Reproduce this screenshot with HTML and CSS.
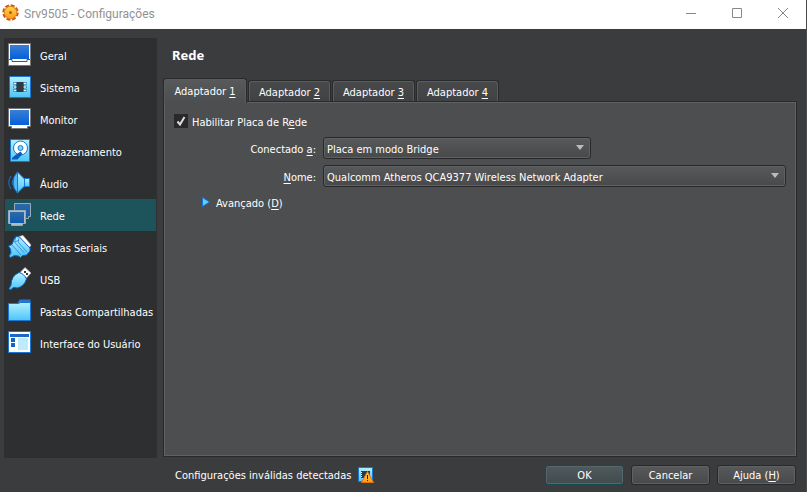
FILE: index.html
```html
<!DOCTYPE html>
<html lang="pt-BR">
<head>
<meta charset="utf-8">
<title>Srv9505 - Configurações</title>
<link rel="stylesheet" href="styles.css">
</head>
<body>
<svg class="defs" aria-hidden="true">
  <defs>
    <linearGradient id="screen" x1="0" y1="0" x2="0" y2="1"><stop offset="0" stop-color="#3a7fd6"/><stop offset="1" stop-color="#0560d8"/></linearGradient>
    <linearGradient id="sky" x1="0" y1="0" x2="0" y2="1"><stop offset="0" stop-color="#b4f0ff"/><stop offset="1" stop-color="#4cc4fa"/></linearGradient>
    <linearGradient id="dim" x1="0" y1="0" x2="0" y2="1"><stop offset="0" stop-color="#2f69a8"/><stop offset="1" stop-color="#0c5cb0"/></linearGradient>
    <linearGradient id="gold" x1="0" y1="0" x2="0" y2="1"><stop offset="0" stop-color="#ffd84a"/><stop offset="1" stop-color="#fb9a1c"/></linearGradient>
  </defs>
</svg>
<div class="window">
  <header class="titlebar">
    <svg class="gear" viewBox="0 0 17 17" aria-hidden="true">
      <circle cx="8.500" cy="8.500" r="6.800" fill="none" stroke="#d4550f" stroke-width="2.800" stroke-dasharray="3.800 1.540"/>
      <circle cx="8.500" cy="8.500" r="6.200" fill="url(#gold)" stroke="#e8801a"/>
      <circle cx="8.500" cy="8.500" r="1.500" fill="#c8500a"/>
    </svg>
    <h1>Srv9505 - Configurações</h1>
    <div class="controls">
      <button type="button" aria-label="Minimizar"><svg viewBox="0 0 10 10"><path d="M0 5.500h10"/></svg></button>
      <button type="button" aria-label="Maximizar"><svg viewBox="0 0 10 10"><path d="M.5.5h9v9h-9z"/></svg></button>
      <button type="button" aria-label="Fechar"><svg viewBox="0 0 10 10"><path d="M0 0l10 10M10 0L0 10"/></svg></button>
    </div>
  </header>
  <div class="content">
    <nav class="sidebar">
      <a href="#geral"><svg viewBox="0 0 24 24" aria-hidden="true"><path d="M.5.5h22v22H.5z" fill="#fff" stroke="#777"/><path d="M2 2h19v14H2z" fill="url(#screen)"/><path d="M1 16.500h3v2h15v-2h3" fill="none" stroke="#555"/></svg><span>Geral</span></a>
      <a href="#sistema"><svg viewBox="0 0 24 24" aria-hidden="true"><path d="M1.500 1.500h21v21h-21z" fill="url(#sky)" stroke="#1976d2"/><path d="M8 7h8v10H8z" fill="#303940"/><g fill="#fff" stroke="#277aaa" stroke-width=".7"><path d="M5.500 7.500h3v2h-3zM5.500 11h3v2h-3zM5.500 14.500h3v2h-3zM15.500 7.500h3v2h-3zM15.500 11h3v2h-3zM15.500 14.500h3v2h-3z"/></g></svg><span>Sistema</span></a>
      <a href="#monitor"><svg viewBox="0 0 24 24" aria-hidden="true"><path d="M.5 1.500h22v18h-3v2h-16v-2h-3z" fill="#fff" stroke="#777"/><path d="M2 3h19v15H2z" fill="url(#screen)"/></svg><span>Monitor</span></a>
      <a href="#armazenamento"><svg viewBox="0 0 24 24" aria-hidden="true"><path d="M2.500.5h19v22h-19z" fill="url(#sky)" stroke="#1976d2"/><circle cx="12.500" cy="9" r="7" fill="#fff" stroke="#1b78cc"/><circle cx="12.500" cy="9" r="2.500" fill="#79d6fb" stroke="#1b78cc"/><path d="M12.500 12.500l2 2.500-5 5.500H4V19l3.500-3z" fill="#0a5dbd"/></svg><span>Armazenamento</span></a>
      <a href="#audio"><svg viewBox="0 0 24 24" aria-hidden="true"><path d="M3 5Q-1.500 11.500 3 18M5 8.500q-2 3 0 6" fill="none" stroke="#1976d2"/><path d="M6 6L9.500.8V22.200L6 17q-1.500-5.500 0-11z" fill="#52b9f5" stroke="#1672d4"/><path d="M9.500 1l7 7v7l-7 7z" fill="url(#sky)" stroke="#1976d2"/><path d="M16.500 7.500h5v8h-5z" fill="url(#sky)" stroke="#1976d2"/></svg><span>Áudio</span></a>
      <a href="#rede" class="current" aria-current="page"><svg viewBox="0 0 24 24" aria-hidden="true"><path d="M6.500.5h16v13h-2v2h-12v-2h-2z" fill="url(#dim)" stroke="#9aabb5"/><path d="M.5 7.500h17v13h-3v2h-11v-2h-3z" fill="#b1bbc1" stroke="#9aabb5"/><path d="M2 9h14v11H2z" fill="url(#dim)"/></svg><span>Rede</span></a>
      <a href="#seriais"><svg viewBox="0 0 24 24" aria-hidden="true"><path d="M11 1.500L15 .5l8 9.500-2 3z" fill="#fff" stroke="#bbb" stroke-width=".7"/><path d="M8 1.500l3.500.5L22 13v3l-3.500 4-4 .500-2 2-2-1.500-4-.5-4 2-1.500-1.500 2-3-.5-4L.5 11 4 9.500l2-5z" fill="url(#sky)" stroke="#0c67d1"/><path d="M8 2L6.500 7l10 11M4 10l9 10M11 3l-1 4 9 10M7 7l4-2" fill="none" stroke="#1976d2" stroke-width=".7"/></svg><span>Portas Seriais</span></a>
      <a href="#usb"><svg viewBox="0 0 24 24" aria-hidden="true"><path d="M17 .5l6 5.500-6 6.500-6-6z" fill="#fff" stroke="#aaa" stroke-width=".7"/><path d="M16 4h2v2h-2zM18 6h2v2h-2z" fill="#333"/><path d="M11 5.500q5 1 7.500 6.500-2 7-9 9l-4-.5-3 2.500L1 21.500 3 18Q3 9 11 5.500z" fill="url(#sky)" stroke="#0c5ead"/></svg><span>USB</span></a>
      <a href="#pastas"><svg viewBox="0 0 24 24" aria-hidden="true"><path d="M.5 4h9l2-3.500h11V10H.5z" fill="#2c72ce"/><path d="M.5 4.500h10l2-1h10v18H.5z" fill="url(#sky)" stroke="#1976d2"/></svg><span>Pastas Compartilhadas</span></a>
      <a href="#interface"><svg viewBox="0 0 24 24" aria-hidden="true"><path d="M.5.5h22v21H.5z" fill="#fff" stroke="#1976d2"/><path d="M2 3h19v3H2z" fill="#1c67c9"/><path d="M3 7h4v4H3zM3 12h4v4H3z" fill="#1264c8"/><path d="M10 7h10v12H10z" fill="#bfeafc"/></svg><span>Interface do Usuário</span></a>
    </nav>
    <main class="page">
      <h2>Rede</h2>
      <div class="tabs" role="tablist">
        <button type="button" role="tab" aria-selected="true">Adaptador <u>1</u></button>
        <button type="button" role="tab" aria-selected="false">Adaptador <u>2</u></button>
        <button type="button" role="tab" aria-selected="false">Adaptador <u>3</u></button>
        <button type="button" role="tab" aria-selected="false">Adaptador <u>4</u></button>
      </div>
      <form class="panel" id="settings">
        <div class="enable">
          <span class="check">
            <input type="checkbox" id="enable" checked>
            <svg viewBox="0 0 14 14" aria-hidden="true"><path d="M3.500 7.500L6 10.500 10.500 3"/></svg>
          </span>
          <label for="enable">Habilitar Placa de R<u>e</u>de</label>
        </div>
        <div class="fields">
          <label for="attached">Conectado <u>a</u>:</label>
          <span class="combo short"><select id="attached"><option>Placa em modo Bridge</option></select></span>
          <label for="name"><u>N</u>ome:</label>
          <span class="combo"><select id="name"><option>Qualcomm Atheros QCA9377 Wireless Network Adapter</option></select></span>
        </div>
        <button type="button" class="advanced" aria-expanded="false"><svg viewBox="0 0 8 10" aria-hidden="true"><path d="M.5.5L7.500 5l-7 4.500z" fill="#62ccff" stroke="#1976d2"/></svg><span>Avançado (<u>D</u>)</span></button>
      </form>
    </main>
  </div>
  <footer class="footer">
    <p>Configurações inválidas detectadas</p>
    <svg class="warning" viewBox="0 0 16 16" aria-hidden="true"><path d="M.5.5h14v14H.5z" fill="url(#sky)" stroke="#1976d2"/><path d="M3 4h9v7H3z" fill="#303940"/><path d="M3 5h1v1H3zM3 7h1v1H3zM3 9h1v1H3z" fill="#fff"/><path d="M9.500 4.500l6 11h-12z" fill="url(#gold)" stroke="#e3700b"/><path d="M9 8h1v4H9zM9 13h1v1H9z" fill="#222"/></svg>
    <div class="actions">
      <button type="submit" form="settings" class="default">OK</button>
      <button type="button">Cancelar</button>
      <button type="button">Ajuda (<u>H</u>)</button>
    </div>
  </footer>
</div>
</body>
</html>
```
FILE: styles.css
```css
* { box-sizing: border-box; }

body {
  margin: 0;
  background: #3b3c3e;
  color: #fff;
  font: 11px/14px "DejaVu Sans Condensed", sans-serif;
}

h1, h2, p { margin: 0; }
button, select, input { font: inherit; color: inherit; margin: 0; }
u { text-underline-offset: 2px; text-decoration-skip-ink: none; }
.defs { position: absolute; width: 0; height: 0; }

.window {
  display: flex;
  flex-direction: column;
  min-height: 100vh;
  border-right: 1px solid #4a4b4d;
}

.titlebar {
  display: flex;
  align-items: center;
  gap: 5px;
  height: 29px;
  padding-left: 2px;
  background: #fff;
}
.gear { width: 17px; height: 17px; margin-bottom: 4px; }
.titlebar h1 {
  margin-bottom: 2px;
  color: #929292;
  font: 12px/16px Roboto, sans-serif;
}
.controls { display: flex; margin-left: auto; }
.controls button {
  display: grid;
  place-items: center;
  width: 46px;
  height: 29px;
  padding: 0 0 3px;
  border: 0;
  background: none;
}
.controls svg {
  width: 10px;
  height: 10px;
  fill: none;
  stroke: #888;
}

.content {
  display: flex;
  flex: 1;
  gap: 6px;
  padding: 9px 9px 0 4px;
}

.sidebar {
  width: 153px;
  padding: 1px;
  background: #2e2f31;
}
.sidebar a {
  display: flex;
  align-items: center;
  gap: 8px;
  height: 32px;
  padding-left: 3px;
  color: inherit;
  text-decoration: none;
  white-space: nowrap;
}
.sidebar svg { flex: none; width: 24px; height: 24px; }
.sidebar span { padding-top: 4px; }
.sidebar .current { background: #1d545b; }

.page {
  display: flex;
  flex: 1;
  flex-direction: column;
  min-width: 0;
}
.page h2 {
  padding: 8px 9px 0;
  font: bold 13px/18px "Noto Sans", sans-serif;
}

.tabs {
  display: flex;
  align-items: flex-end;
  gap: 1px;
  height: 24px;
  margin-top: 13px;
}
.tabs button {
  position: relative;
  width: 83px;
  height: 21px;
  padding: 4px 0 0;
  border: 1px solid #292a2c;
  border-bottom: 0;
  border-radius: 3px 3px 0 0;
  background: linear-gradient(#48494b, #414244);
  box-shadow: inset 1px 1px #5b5c5e, inset -1px 0 #5b5c5e;
}
.tabs [aria-selected="true"] {
  z-index: 1;
  width: 84px;
  height: 25px;
  margin-bottom: -2px;
  padding: 1px 0 0;
  background: linear-gradient(#58595b, #4d4e50);
}

.panel {
  flex: 1;
  margin-bottom: 1px;
  padding: 12px 10px;
  border: 1px solid #292a2c;
  background: #4d4e50;
  box-shadow: inset 0 0 0 1px #606163;
}
.enable { display: flex; align-items: center; gap: 4px; height: 14px; }
.enable label { padding-top: 4px; }
.check { position: relative; width: 14px; height: 14px; }
.check input {
  display: block;
  appearance: none;
  width: 14px;
  height: 14px;
  background: #29292b;
}
.check svg {
  position: absolute;
  inset: 0;
  fill: none;
  stroke: #ddd;
  stroke-width: 2;
  pointer-events: none;
}
.check input:not(:checked) + svg { display: none; }

.fields {
  display: grid;
  grid-template-columns: 142px 1fr;
  align-items: center;
  gap: 6px 7px;
  margin-top: 9px;
}
.fields label { padding-top: 4px; text-align: right; }
.combo { position: relative; }
.short { width: 268px; }
.combo::after {
  content: "";
  position: absolute;
  top: 8px;
  right: 7px;
  border: 4px solid transparent;
  border-top: 5px solid #bbb;
  border-bottom: 0;
  pointer-events: none;
}
.combo select {
  display: block;
  appearance: none;
  width: 100%;
  height: 22px;
  padding: 4px 20px 0 3px;
}
.combo select, .actions button {
  border: 1px solid #29292b;
  border-radius: 3px;
  background: linear-gradient(#58595b, #48494b);
  box-shadow: inset 0 0 0 1px #606163;
}
.advanced {
  display: flex;
  align-items: center;
  gap: 6px;
  margin: 6px 0 0 28px;
  padding: 0;
  border: 0;
  background: none;
}
.advanced svg { width: 8px; height: 10px; }
.advanced span { padding-top: 4px; }

.footer {
  display: flex;
  align-items: center;
  gap: 7px;
  padding: 7px 10px 7px 175px;
}
.footer p { padding-top: 2px; }
.warning { width: 16px; height: 16px; }
.actions { display: flex; gap: 7px; margin-left: auto; }
.actions button { width: 79px; height: 20px; padding: 2px 0 0; }
.actions .default {
  border-color: #174951;
  background: linear-gradient(#505a5d, #414a4d);
  box-shadow: inset 0 0 0 1px #53686c;
}
```
